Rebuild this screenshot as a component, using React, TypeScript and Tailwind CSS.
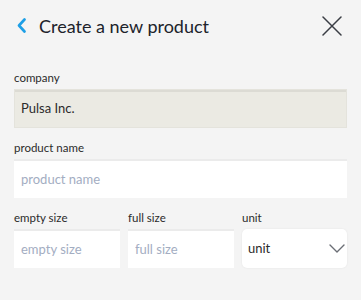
function Field({
  label,
  placeholder,
  className = "",
}: {
  label: string;
  placeholder: string;
  className?: string;
}) {
  return (
    <div className={`flex flex-col ${className}`}>
      <label className="text-[11.5px] leading-[14px] text-[#2b2b2b]">{label}</label>
      <input
        placeholder={placeholder}
        className="mt-[4px] h-[39px] w-full bg-white px-[7px] text-[13px] text-[#2b2b2b] outline-none shadow-[inset_0_2px_0_#ebebeb] placeholder:text-[#a3adc2]"
      />
    </div>
  );
}

export default function App() {
  return (
    <div className="h-[300px] w-[361px] overflow-hidden bg-[#f4f4f4] font-['Lato',sans-serif]">
      <header className="flex h-[52px] items-center justify-between pl-[17px] pr-[19px]">
        <div className="flex items-center">
          <svg width="10" height="15" viewBox="0 0 10 15" className="mb-[1px]">
            <path
              d="M7.5 1.5 L2 7.5 L7.5 13.5"
              fill="none"
              stroke="#1d9fe6"
              strokeWidth="2.6"
              strokeLinecap="round"
              strokeLinejoin="round"
            />
          </svg>
          <h1 className="ml-[12px] text-[18px] leading-none text-[#20232b]">Create a new product</h1>
        </div>
        <svg width="20" height="20" viewBox="0 0 20 20">
          <path d="M1 1 L19 19 M19 1 L1 19" stroke="#3a3d44" strokeWidth="1.5" strokeLinecap="round" />
        </svg>
      </header>

      <div className="px-[14px] pt-[19px]">
        <div className="flex flex-col">
          <label className="text-[11.5px] leading-[14px] text-[#2b2b2b]">company</label>
          <div className="mt-[4px] flex h-[39px] items-center border border-[#e4e3dc] bg-[#ebeae3] px-[6px] text-[13px] text-[#2b2b2b] shadow-[inset_0_2px_0_#dcdbd4]">
            Pulsa Inc.
          </div>
        </div>

        <Field label="product name" placeholder="product name" className="mt-[13px]" />

        <div className="mt-[13px] flex gap-[8px]">
          <Field label="empty size" placeholder="empty size" className="w-[106px]" />
          <Field label="full size" placeholder="full size" className="w-[106px]" />
          <div className="flex flex-1 flex-col">
            <label className="text-[11.5px] leading-[14px] text-[#2b2b2b]">unit</label>
            <div className="mt-[4px] flex h-[39px] items-center justify-between rounded-[5px] bg-white pl-[6px] pr-[2px] text-[13px] text-[#2b2b2b] shadow-[0_0_2px_rgba(0,0,0,0.08)]">
              <span>unit</span>
              <svg width="16" height="9" viewBox="0 0 16 9">
                <path
                  d="M1 1 L8 8 L15 1"
                  fill="none"
                  stroke="#6b6e75"
                  strokeWidth="1.4"
                  strokeLinecap="round"
                  strokeLinejoin="round"
                />
              </svg>
            </div>
          </div>
        </div>
      </div>
    </div>
  );
}
